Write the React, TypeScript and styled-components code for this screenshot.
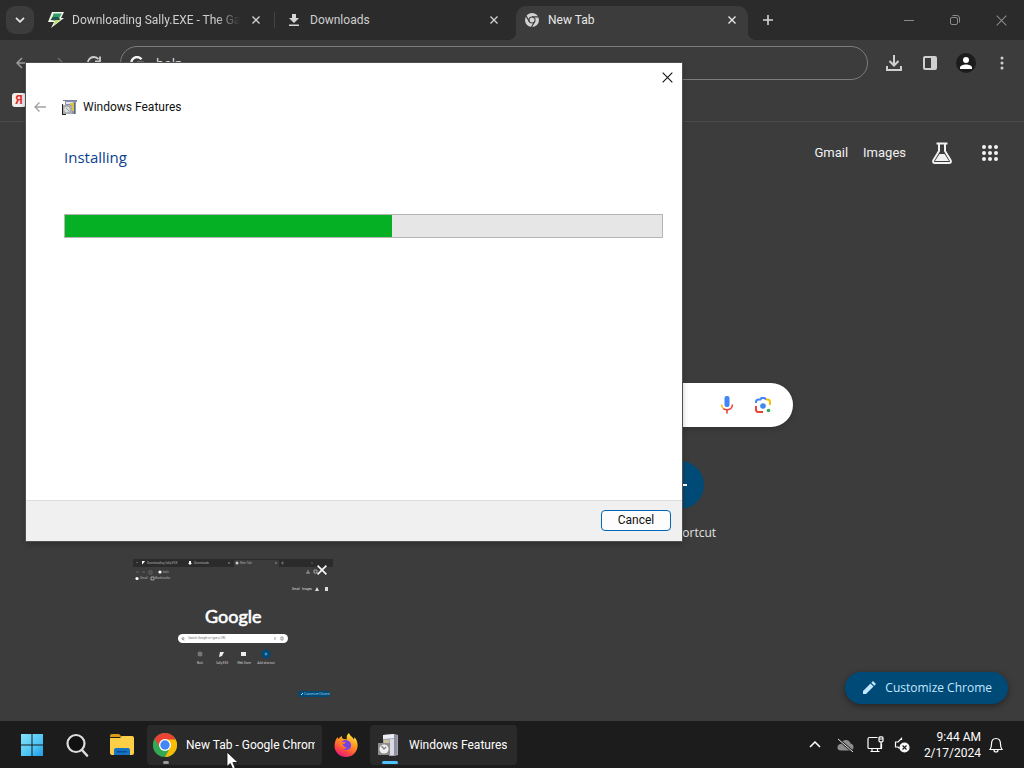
import React from "react";
import styled, { createGlobalStyle } from "styled-components";

const GlobalStyle = createGlobalStyle`
  *, *::before, *::after { box-sizing: border-box; }
  body { margin: 0; background: #3c3c3c; }
  button, input { font: inherit; color: inherit; }
  button { padding: 0; border: 0; background: none; display: inline-flex; align-items: center; justify-content: center; }
  svg { display: block; flex: none; }
`;

const humanist = `"Open Sans", "Noto Sans", sans-serif`;

const Desktop = styled.div`
  position: relative;
  display: flex;
  flex-direction: column;
  min-height: 100vh;
  overflow: hidden;
  background: #3c3c3c;
  color: #e3e3e3;
  font-family: Roboto, sans-serif;
  font-size: 12px;
  line-height: 16px;
`;

/* Browser frame */
const TabStrip = styled.header`
  display: flex;
  align-items: flex-end;
  height: 40px;
  padding-left: 6px;
  background: #2b2b2b;
`;
const TabSearch = styled.button`
  flex: none;
  width: 28px;
  height: 28px;
  margin: 0 6px 6px 0;
  border-radius: 9px;
  background: #3c3c3c;
`;
const Tab = styled.div<{ $active?: boolean; $divided?: boolean }>`
  position: relative;
  display: flex;
  align-items: center;
  gap: 8px;
  flex: 0 1 232px;
  min-width: 0;
  height: 34px;
  margin-right: 6px;
  padding: 0 8px 6px;
  border-radius: 10px 10px 0 0;
  background: ${(p) => (p.$active ? "#3c3c3c" : "transparent")};
  color: ${(p) => (p.$active ? "#e8e8e8" : "#cfcfcf")};

  &::before, &::after {
    content: "";
    display: ${(p) => (p.$active ? "block" : "none")};
    position: absolute;
    bottom: 0;
    width: 8px;
    height: 8px;
  }
  &::before { left: -8px; background: radial-gradient(circle at 0 0, transparent 8px, #3c3c3c 8px); }
  &::after {
    display: ${(p) => (p.$active || p.$divided ? "block" : "none")};
    right: ${(p) => (p.$active ? "-8px" : "-3px")};
    bottom: ${(p) => (p.$active ? "0" : "12px")};
    width: ${(p) => (p.$active ? "8px" : "1px")};
    height: ${(p) => (p.$active ? "8px" : "16px")};
    background: ${(p) => (p.$active ? "radial-gradient(circle at 100% 0, transparent 8px, #3c3c3c 8px)" : "#444")};
  }
`;
const TabTitle = styled.span<{ $fade?: boolean }>`
  flex: 1;
  min-width: 0;
  overflow: hidden;
  white-space: nowrap;
  mask-image: ${(p) => (p.$fade ? "linear-gradient(90deg, #000 86%, transparent)" : "none")};
`;
const TabClose = styled.button`
  width: 16px;
  height: 16px;
`;
const NewTab = styled.button`
  flex: none;
  width: 28px;
  height: 28px;
  margin-bottom: 6px;
`;
const WindowControls = styled.div`
  display: flex;
  align-self: stretch;
  margin-left: auto;
  color: #8a8a8a;
`;
const WindowControl = styled.button`
  width: 46px;
  height: 40px;
`;
const Toolbar = styled.div`
  display: flex;
  align-items: center;
  height: 46px;
  padding: 0 4px;
  color: #9a9a9a;
`;
const ToolButton = styled.button<{ $bright?: boolean }>`
  flex: none;
  width: 36px;
  height: 34px;
  color: ${(p) => (p.$bright ? "#d0d0d0" : "inherit")};
`;
const Omnibox = styled.label`
  display: flex;
  flex: 1;
  align-items: center;
  gap: 12px;
  height: 34px;
  margin: 0 8px;
  padding: 0 9px;
  border: 1px solid #7c7c7c;
  border-radius: 17px;
`;
const OmniboxInput = styled.input`
  flex: 1;
  min-width: 0;
  border: 0;
  outline: 0;
  padding: 0;
  background: none;
  color: #e8e8e8;
  font-family: ${humanist};
  font-size: 13px;
`;
const Avatar = styled.span`
  display: grid;
  place-items: center;
  width: 20px;
  height: 20px;
  border-radius: 50%;
  background: #1c1c1c;
`;
const Bookmarks = styled.nav`
  display: flex;
  align-items: flex-start;
  height: 36px;
  padding: 7px 12px;
  border-bottom: 1px solid #4b4b4b;
`;
const BookmarkIcon = styled.a`
  display: grid;
  place-items: center;
  width: 14px;
  height: 14px;
  border-radius: 3px;
  background: #f3eeee;
  color: #e0322b;
  font-weight: 700;
  line-height: 14px;
  text-decoration: none;
`;

/* New tab page */
const Page = styled.main`
  display: flex;
  flex: 1;
  flex-direction: column;
  align-items: center;
`;
const PageLinks = styled.nav`
  display: flex;
  align-items: center;
  align-self: stretch;
  justify-content: flex-end;
  height: 62px;
  padding-right: 22px;
`;
const PageLink = styled.a`
  margin-left: 15px;
  color: #f1f1f1;
  font-size: 13px;
  text-decoration: none;
`;
const PageTool = styled.button`
  width: 24px;
  height: 24px;
  margin-left: 24px;
`;
const SearchBox = styled.div`
  display: flex;
  align-items: center;
  width: 100%;
  max-width: 562px;
  height: 44px;
  margin-top: 199px;
  padding-right: 18px;
  border-radius: 22px;
  background: #fff;
  box-shadow: 0 2px 6px rgba(0, 0, 0, 0.2);
`;
const SearchInput = styled.input`
  flex: 1;
  min-width: 0;
  border: 0;
  outline: 0;
  background: none;
`;
const SearchTool = styled.button`
  width: 24px;
  height: 24px;
  margin-left: 12px;
`;
const Shortcuts = styled.div`
  display: flex;
  justify-content: flex-end;
  width: 100%;
  max-width: 448px;
  margin-top: 34px;
`;
const Shortcut = styled.button`
  flex-direction: column;
  gap: 16px;
  width: 112px;
  font-family: ${humanist};
`;
const ShortcutDisc = styled.span`
  display: grid;
  place-items: center;
  width: 48px;
  height: 48px;
  border-radius: 50%;
  background: #004a77;
`;
const Customize = styled.button`
  align-self: flex-end;
  gap: 8px;
  height: 32px;
  margin: auto 16px 17px;
  padding: 0 16px;
  border-radius: 16px;
  background: #004a77;
  box-shadow: 0 2px 6px rgba(0, 0, 0, 0.4);
  color: #c2e7ff;
  font-family: ${humanist};
`;

/* Dialog window */
const Dialog = styled.section`
  position: absolute;
  left: 26px;
  top: 63px;
  display: flex;
  flex-direction: column;
  width: 656px;
  height: 478px;
  background: #fff;
  color: #111;
  box-shadow: 0 0 0 1px #505050, 0 2px 6px rgba(0, 0, 0, 0.3);
`;
const DialogBar = styled.div`
  display: flex;
  justify-content: flex-end;
  height: 28px;
`;
const DialogClose = styled.button`
  width: 30px;
  height: 28px;
`;
const DialogTitle = styled.div`
  display: flex;
  align-items: center;
  height: 32px;
  padding-left: 6px;
`;
const DialogBack = styled.button`
  width: 16px;
  height: 16px;
  margin-right: 14px;
`;
const DialogName = styled.h1`
  margin: 0 0 0 5px;
  font-size: 12px;
  font-weight: 400;
`;
const DialogBody = styled.div`
  flex: 1;
  padding: 22px 19px 0 38px;
`;
const Heading = styled.h2`
  margin: 0 0 45px;
  color: #0b3f8f;
  font-family: ${humanist};
  font-size: 15px;
  font-weight: 400;
  line-height: 24px;
`;
const Progress = styled.progress`
  display: block;
  width: 100%;
  height: 24px;
  border: 1px solid #b5b5b5;
  background: #e6e6e6;
  appearance: none;
  &::-webkit-progress-bar { background: #e6e6e6; }
  &::-webkit-progress-value { background: #06b025; }
`;
const DialogFooter = styled.footer`
  display: flex;
  align-items: center;
  justify-content: flex-end;
  height: 41px;
  padding: 0 11px 2px 0;
  border-top: 1px solid #dcdcdc;
  background: #f0f0f0;
`;
const CancelButton = styled.button`
  width: 70px;
  height: 21px;
  border: 1px solid #0067b8;
  border-radius: 4px;
  background: #fdfdfd;
`;

/* Task bar */
const Preview = styled.aside`
  position: absolute;
  left: 133px;
  bottom: 59px;
  width: 200px;
  height: 150px;
`;
const PreviewClose = styled.button`
  position: absolute;
  top: 2px;
  right: 2px;
  width: 18px;
  height: 18px;
`;
const Taskbar = styled.footer`
  display: flex;
  align-items: center;
  height: 47px;
  padding: 0 19px 0 20px;
  background: #1c1c1c;
  color: #fff;
`;
const Launcher = styled.button<{ $gap?: number }>`
  flex: none;
  width: 24px;
  height: 40px;
  margin-right: ${(p) => p.$gap ?? 21}px;
`;
const TaskButton = styled.button<{ $width: number; $active?: boolean; $gap?: number }>`
  position: relative;
  flex: 0 1 ${(p) => p.$width}px;
  min-width: 0;
  height: 40px;
  justify-content: flex-start;
  gap: 9px;
  margin-right: ${(p) => p.$gap ?? 0}px;
  padding: 0 7px 0 6px;
  border-radius: 4px;
  background: #2a2a2a;
  &::after {
    content: "";
    position: absolute;
    left: ${(p) => (p.$active ? 12 : 16)}px;
    bottom: 1px;
    width: ${(p) => (p.$active ? 16 : 6)}px;
    height: 3px;
    border-radius: 2px;
    background: ${(p) => (p.$active ? "#4cc2ff" : "#9a9a9a")};
  }
`;
const TaskLabel = styled.span`
  min-width: 0;
  overflow: hidden;
  white-space: nowrap;
`;
const Tray = styled.div`
  display: flex;
  align-items: center;
  gap: 6px;
  margin-left: auto;
`;
const TrayButton = styled.button<{ $wide?: boolean }>`
  width: ${(p) => (p.$wide ? 24 : 18)}px;
  height: 24px;
`;
const Clock = styled.time`
  width: 64px;
  text-align: right;
  white-space: nowrap;
`;
const Pointer = styled.div`
  position: absolute;
  left: 226px;
  bottom: -2px;
`;

const Cross = ({ size, width = 1, color = "currentColor" }: { size: number; width?: number; color?: string }) => (
  <svg width={size} height={size} viewBox="0 0 10 10" stroke={color} strokeWidth={width} fill="none">
    <path d="M.6.6 9.4 9.4M9.4.6.6 9.4" />
  </svg>
);

const Flash = () => (
  <svg width="16" height="16" viewBox="0 0 16 16">
    <path d="M4 0h12l-3 6h3L3 16l3-6H0z" fill="#f4f8e8" />
    <path d="M5.500 1.500h8.300L11 6.500H4z" fill="#2f9e6b" />
    <path d="M2.500 8 4.500 5H10l2.500 2.500-3 1H6z" fill="#25584a" />
    <path d="M7.500 8H12l-6.500 5.500z" fill="#b9e063" />
  </svg>
);

const GrayChrome = () => (
  <svg width="16" height="16" viewBox="0 0 16 16">
    <circle cx="8" cy="8" r="7" fill="#d2d2d2" />
    <circle cx="8" cy="8" r="3.600" fill="#3c3c3c" />
    <circle cx="8" cy="8" r="2.500" fill="#d2d2d2" />
    <path d="M8 4.900h6.500M5.300 9.550 2.050 3.900M10.700 9.550 7.450 15.200" stroke="#3c3c3c" strokeWidth="1.200" />
  </svg>
);

const ChromeLogo = () => (
  <svg width="24" height="24" viewBox="0 0 24 24">
    <circle cx="12" cy="12" r="12" fill="#34a853" />
    <path d="M12 12 1.600 6A12 12 0 0 1 22.400 6z" fill="#ea4335" />
    <path d="M12 6.500h10.700A12 12 0 0 1 12 24l5-9z" fill="#fbbc04" />
    <path d="M1.600 6 7 15l5-3V6z" fill="#ea4335" />
    <path d="M1.600 6 7.100 15l4.900 3-3.400 5.500A12 12 0 0 1 1.600 6z" fill="#34a853" />
    <circle cx="12" cy="12" r="6" fill="#fff" />
    <circle cx="12" cy="12" r="4.700" fill="#4285f4" />
  </svg>
);

const DialogIcon = () => (
  <svg width="16" height="16" viewBox="0 0 16 16">
    <path d="M3 1h12v2h-1v12H3z" fill="#8f93aa" />
    <path d="M1 1h14v1H1z" fill="#7c82a6" />
    <path d="M4 3h7v2H4z" fill="#dfe6ee" />
    <path d="M8 4h5v8H8z" fill="#d7c542" />
    <path d="M12 4h1v11h-1z" fill="#5d6c86" />
    <path d="M1 6h9v9H1z" fill="#a9adb0" />
    <path d="M0 5h1v11H0zM0 15h4v1H0z" fill="#222" />
    <circle cx="5" cy="10.500" r="2.800" fill="#dedede" />
    <path d="m4 9 3 3" stroke="#888" strokeWidth=".8" />
  </svg>
);

const TaskIcon = () => (
  <svg width="24" height="24" viewBox="0 0 24 24">
    <path d="M7 2 18 1l4 1v20l-4 1H13V10H7z" fill="#a5a6b0" />
    <path d="M7 2 18 1v4L7 6z" fill="#ecedf2" />
    <path d="M14 6h4v16h-4z" fill="#d8d9e2" />
    <path d="M18 1.500 21 2v19l-3 1z" fill="#8d8ea0" />
    <path d="M8 7h5v3H8z" fill="#c8c29a" />
    <path d="M2 10h12v12H2z" fill="#8c8c8c" />
    <circle cx="8" cy="16" r="4.600" fill="#efefef" />
    <path d="m5.500 13 2.500 3 2-2" fill="none" stroke="#808080" strokeWidth="1.300" />
  </svg>
);

const Firefox = () => (
  <svg width="24" height="24" viewBox="0 0 24 24">
    <defs>
      <linearGradient id="fox" x1=".8" y1="0" x2=".3" y2="1">
        <stop offset="0" stopColor="#fff044" />
        <stop offset=".4" stopColor="#ff9a1f" />
        <stop offset=".75" stopColor="#ff4a3f" />
        <stop offset="1" stopColor="#e31587" />
      </linearGradient>
    </defs>
    <path d="M15 0c1 3 4 4 4.500 6.200 1-.5 1-1.700.9-2.200C23 7 24 10 23.500 14 22.500 20 18 24 12 24S.5 19.500.5 13c0-4 1.500-7 3-9 .2 1 .7 1.500 1.200 2C5.500 4.500 6.500 3.500 8 3c-.3 1.500.2 2.500 1.500 3l3.500.3C12 4 13 1.500 15 0z" fill="url(#fox)" />
    <path d="M7 10c1-2.500 4-3.500 6.500-2.500 3 1 4.500 4 3 7-1.500 2.500-5 3.200-7.500 1.500 2 .2 3.500-.5 4-1.500-2 .3-3-1.500-5-1.500C7 13 6.500 11.500 7 10z" fill="#7542e5" />
    <path d="M4.700 9c2-1.800 4 .2 7 .2-.2 1.500-2 1.800-2.800 2 0 1.800 1.500 2.700 3.100 3-2.500 1.300-7 0-7.300-5.200z" fill="#ff7a2b" />
  </svg>
);

const PageThumbnail = () => (
  <svg width="200" height="150" viewBox="0 0 200 150" fontFamily="Roboto, sans-serif" fontSize="3" fill="#aaa">
    <path d="M0 0h200v8H0z" fill="#2b2b2b" />
    <path d="M101 2q0-1 1-1h43q1 0 1 1v6h-45z" fill="#3c3c3c" />
    <path d="m9 2 3 0-1 1.500-2 2zM56 2h2v2h1l-2 2-2-2h1z" fill="#fff" />
    <circle cx="104" cy="4" r="1.500" fill="#ccc" />
    <text x="14" y="5">Downloading Sally.EXE</text>
    <text x="61" y="5">Downloads</text>
    <text x="107" y="5">New Tab</text>
    <path d="m95 3 2 2m0-2-2 2M142 3l2 2m0-2-2 2M148 4h3M149.500 2.500v3M3 3l1 1 1-1M178 4h2" fill="none" stroke="#999" strokeWidth=".5" />
    <path d="M3 13h3M9 13h3M16 12h3v3h-3z" fill="none" stroke="#888" strokeWidth=".5" />
    <circle cx="27" cy="13" r="1.600" fill="#fff" />
    <text x="30" y="14">bolz</text>
    <path d="M173 14h4M175 11v3M181 11h3v3h-3z" fill="none" stroke="#ccc" strokeWidth=".7" />
    <circle cx="4" cy="19.500" r="1.600" fill="#fff" />
    <path d="M18 18h3v3h-3z" fill="none" stroke="#ddd" strokeWidth=".6" />
    <text x="7" y="20">Gmail</text>
    <text x="22" y="20">Bookmarks</text>
    <g fill="#ddd">
      <text x="159" y="31">Gmail</text>
      <text x="169" y="31">Images</text>
      <path d="m184 28-2 4h4zM192 28h3v4h-3z" />
    </g>
    <text x="72" y="64" fontFamily="Lato, sans-serif" fontSize="18" fill="#fff" stroke="#fff" strokeWidth=".6">Google</text>
    <rect x="45" y="75" width="110" height="9" rx="4.500" fill="#fff" />
    <text x="55" y="80" fill="#777">Search Google or type a URL</text>
    <path d="M49 79.500a1 1 0 1 1 2 0 1 1 0 1 1-2 0l2 2M142 78v3M148 78h2v3h-2z" fill="none" stroke="#777" strokeWidth=".7" />
    <circle cx="67" cy="95" r="2.500" fill="#777" />
    <path d="m87 93 4 0-2 4-3 1z M108 93h5v4h-5z" fill="#eee" />
    <circle cx="133" cy="95" r="4.500" fill="#004a77" />
    <path d="M131.500 95h3M133 93.500v3" stroke="#9cd3ff" strokeWidth=".6" />
    <g textAnchor="middle" fill="#ccc">
      <text x="67" y="105">Bolz</text>
      <text x="89" y="105">Sally.EXE</text>
      <text x="111" y="105">Web Store</text>
      <text x="133" y="105">Add shortcut</text>
    </g>
    <rect x="165" y="132" width="32" height="6" rx="3" fill="#004a77" />
    <path d="m168 136 2-2" stroke="#c2e7ff" />
    <text x="171" y="136" fill="#9bc9e8">Customize Chrome</text>
  </svg>
);

export default function App() {
  return (
    <Desktop>
      <GlobalStyle />
      <TabStrip>
        <TabSearch aria-label="Search tabs">
          <svg width="10" height="6" viewBox="0 0 10 6" fill="none" stroke="#e3e3e3" strokeWidth="1.800"><path d="m1 .8 4 4 4-4" /></svg>
        </TabSearch>
        <Tab $divided>
          <Flash />
          <TabTitle $fade>Downloading Sally.EXE - The Ga</TabTitle>
          <TabClose aria-label="Close tab"><Cross size={8} width={1.7} /></TabClose>
        </Tab>
        <Tab>
          <svg width="16" height="16" viewBox="0 0 16 16" fill="#d6d6d6"><path d="M6 2h4v4h3l-5 5-5-5h3zM3 12.500h10V14H3z" /></svg>
          <TabTitle>Downloads</TabTitle>
          <TabClose aria-label="Close tab"><Cross size={8} width={1.7} /></TabClose>
        </Tab>
        <Tab $active>
          <GrayChrome />
          <TabTitle>New Tab</TabTitle>
          <TabClose aria-label="Close tab"><Cross size={8} width={1.7} /></TabClose>
        </Tab>
        <NewTab aria-label="New tab">
          <svg width="10" height="10" viewBox="0 0 10 10" stroke="#d6d6d6" strokeWidth="1.600"><path d="M5 0v10M0 5h10" /></svg>
        </NewTab>
        <WindowControls>
          <WindowControl aria-label="Minimize">
            <svg width="10" height="10" viewBox="0 0 10 10" stroke="currentColor"><path d="M0 5.500h10" /></svg>
          </WindowControl>
          <WindowControl aria-label="Restore">
            <svg width="10" height="10" viewBox="0 0 10 10" fill="none" stroke="currentColor"><rect x=".5" y="2.500" width="7" height="7" rx="1.500" /><path d="M2.500.5H7A2.500 2.500 0 0 1 9.500 3v4.500" /></svg>
          </WindowControl>
          <WindowControl aria-label="Close"><Cross size={11} /></WindowControl>
        </WindowControls>
      </TabStrip>

      <Toolbar>
        <ToolButton aria-label="Back">
          <svg width="12" height="12" viewBox="0 0 12 12" fill="none" stroke="currentColor" strokeWidth="1.500"><path d="M12 6H1M6 1 1 6l5 5" /></svg>
        </ToolButton>
        <ToolButton aria-label="Forward">
          <svg width="12" height="12" viewBox="0 0 12 12" fill="none" stroke="#6c6c6c" strokeWidth="1.500"><path d="M0 6h11M6 1l5 5-5 5" /></svg>
        </ToolButton>
        <ToolButton $bright aria-label="Reload">
          <svg width="14" height="14" viewBox="0 0 14 14" fill="none" stroke="currentColor" strokeWidth="1.800"><path d="M12.500 9A6 6 0 1 1 11.500 3.200M13 .5v5H8" /></svg>
        </ToolButton>
        <Omnibox>
          <svg width="14" height="14" viewBox="0 0 14 14" fill="none" stroke="#f5f5f5" strokeWidth="2.400"><path d="M11.500 3.300A5.600 5.600 0 1 0 12.600 7H7" /></svg>
          <OmniboxInput aria-label="Address and search bar" defaultValue="bolz" />
        </Omnibox>
        <ToolButton $bright aria-label="Downloads">
          <svg width="16" height="16" viewBox="0 0 16 16" fill="none" stroke="currentColor" strokeWidth="2"><path d="M8 0v10M3.500 6 8 10.500 12.500 6M1 11v4h14v-4" /></svg>
        </ToolButton>
        <ToolButton $bright aria-label="Side panel">
          <svg width="14" height="14" viewBox="0 0 14 14"><rect x="1" y="1" width="12" height="12" rx="1" fill="none" stroke="currentColor" strokeWidth="2" /><path d="M8 1h5v12H8z" fill="currentColor" /></svg>
        </ToolButton>
        <ToolButton aria-label="Profile">
          <Avatar><svg width="12" height="12" viewBox="0 0 12 12" fill="#fff"><circle cx="6" cy="3" r="3" /><path d="M0 12v-1.500C0 8.500 3.500 7.500 6 7.500s6 1 6 3V12z" /></svg></Avatar>
        </ToolButton>
        <ToolButton $bright aria-label="Menu">
          <svg width="4" height="14" viewBox="0 0 4 14" fill="currentColor"><circle cx="2" cy="2" r="1.500" /><circle cx="2" cy="7" r="1.500" /><circle cx="2" cy="12" r="1.500" /></svg>
        </ToolButton>
      </Toolbar>
      <Bookmarks aria-label="Bookmarks">
        <BookmarkIcon href="#">Я</BookmarkIcon>
      </Bookmarks>

      <Page>
        <PageLinks>
          <PageLink href="#">Gmail</PageLink>
          <PageLink href="#">Images</PageLink>
          <PageTool aria-label="Search Labs">
            <svg width="20" height="22" viewBox="0 0 20 22" fill="none" stroke="#f1f1f1" strokeWidth="2"><path d="M4.500 1.500h11M7 2v7L1.300 18.500Q.5 21 3 21h14q2.500 0 1.700-2.500L13 9V2" /><path d="M7.500 12h5l4.500 7H3z" fill="#f1f1f1" stroke="none" /></svg>
          </PageTool>
          <PageTool aria-label="Google apps">
            <svg width="16" height="16" viewBox="0 0 16 16" fill="#f1f1f1">
              {[2, 8, 14].map((y) => [2, 8, 14].map((x) => <circle key={`${x}-${y}`} cx={x} cy={y} r="2" />))}
            </svg>
          </PageTool>
        </PageLinks>
        <SearchBox>
          <SearchInput aria-label="Search" />
          <SearchTool aria-label="Voice search">
            <svg width="18" height="18" viewBox="0 0 18 18" fill="none" strokeWidth="1.600"><rect x="6.500" y="0" width="5" height="11" rx="2" fill="#4285f4" /><path d="M3.500 8.500q.2 3 2.200 4.300" stroke="#fbbc04" /><path d="M5.300 12.600q3.700 2.300 7.400 0 1.700-1.500 1.800-4.100" stroke="#ea4335" /><path d="M9 14v3.500" stroke="#ea4335" /></svg>
          </SearchTool>
          <SearchTool aria-label="Search by image">
            <svg width="18" height="18" viewBox="0 0 18 18" fill="none" strokeWidth="2"><path d="M2 7V6q0-2.500 2.500-2.500h2L7.500 2h3L12 3.500" stroke="#4285f4" /><path d="M12 3.500h1.500Q16 3.500 16 6v3" stroke="#fbbc04" /><path d="M2 10v3.500Q2 16 4.500 16H9" stroke="#ea4335" /><circle cx="9" cy="10" r="2.800" fill="#4285f4" /><circle cx="14.500" cy="14.500" r="1.800" fill="#34a853" /></svg>
          </SearchTool>
        </SearchBox>
        <Shortcuts>
          <Shortcut>
            <ShortcutDisc><svg width="14" height="14" viewBox="0 0 14 14" stroke="#fff" strokeWidth="2"><path d="M7 0v14M0 7h14" /></svg></ShortcutDisc>
            Add shortcut
          </Shortcut>
        </Shortcuts>
        <Customize>
          <svg width="16" height="16" viewBox="0 0 16 16" fill="#c2e7ff"><path d="M2 14v-3l7.500-7.500 3 3L5 14zM10.300 2.700 12 1l3 3-1.700 1.700z" /></svg>
          Customize Chrome
        </Customize>
      </Page>

      <Preview aria-label="New Tab preview">
        <PageThumbnail />
        <PreviewClose aria-label="Close window"><Cross size={10} width={1.5} color="#fff" /></PreviewClose>
      </Preview>

      <Dialog role="dialog" aria-labelledby="dialog-name">
        <DialogBar>
          <DialogClose aria-label="Close"><Cross size={11} color="#111" /></DialogClose>
        </DialogBar>
        <DialogTitle>
          <DialogBack aria-label="Back">
            <svg width="12" height="10" viewBox="0 0 12 10" fill="none" stroke="#a3a3a3" strokeWidth="1.400"><path d="M12 5H1M5.500.5 1 5l4.500 4.500" /></svg>
          </DialogBack>
          <DialogIcon />
          <DialogName id="dialog-name">Windows Features</DialogName>
        </DialogTitle>
        <DialogBody>
          <Heading>Installing</Heading>
          <Progress value={548} max={1000} aria-label="Installing" />
        </DialogBody>
        <DialogFooter>
          <CancelButton>Cancel</CancelButton>
        </DialogFooter>
      </Dialog>

      <Taskbar>
        <Launcher aria-label="Start">
          <svg width="24" height="24" viewBox="0 0 24 24">
            <defs><linearGradient id="win" x1="0" y1="0" x2="24" y2="24" gradientUnits="userSpaceOnUse"><stop offset="0" stopColor="#8ae4fc" /><stop offset=".6" stopColor="#4cc5f5" /><stop offset="1" stopColor="#1a94ea" /></linearGradient></defs>
            <path d="M1 1h10.500v10.500H1zM12.500 1H23v10.500H12.500zM1 12.500h10.500V23H1zM12.500 12.500H23V23H12.500z" fill="url(#win)" />
          </svg>
        </Launcher>
        <Launcher aria-label="Search">
          <svg width="24" height="24" viewBox="0 0 24 24" fill="none"><circle cx="11" cy="10.500" r="8.500" fill="#101010" stroke="#dcdcdc" strokeWidth="2.200" /><path d="m17 17 5 5.500" stroke="#dcdcdc" strokeWidth="2.600" strokeLinecap="round" /></svg>
        </Launcher>
        <Launcher $gap={13} aria-label="File Explorer">
          <svg width="24" height="24" viewBox="0 0 24 24"><path d="M0 3q0-2 2-2h7l3 3H0z" fill="#d99a16" /><path d="M0 5h10l2-2h10q2 0 2 2v15q0 2-2 2H2q-2 0-2-2z" fill="#fccf47" /><path d="M4 22v-5q0-2 2-2h12q2 0 2 2v5z" fill="#1672c4" /><path d="M7 18h10v1.500H7z" fill="#0c4d92" /></svg>
        </Launcher>
        <TaskButton $width={175} $gap={12}>
          <ChromeLogo />
          <TaskLabel>New Tab - Google Chrome</TaskLabel>
        </TaskButton>
        <Launcher $gap={12} aria-label="Firefox"><Firefox /></Launcher>
        <TaskButton $width={147} $active>
          <TaskIcon />
          <TaskLabel>Windows Features</TaskLabel>
        </TaskButton>
        <Tray>
          <TrayButton $wide aria-label="Show hidden icons">
            <svg width="12" height="7" viewBox="0 0 12 7" fill="none" stroke="#fff" strokeWidth="1.500"><path d="m1 6 5-5 5 5" /></svg>
          </TrayButton>
          <TrayButton $wide aria-label="OneDrive">
            <svg width="17" height="14" viewBox="0 0 17 14"><path d="M4 12.500q-3.500 0-3.500-3Q.5 6 4 6q1-4 5-4 3.500 0 4.500 3.500Q16.500 6 16.500 9t-3 3.500z" fill="#8d8d8d" /><path d="m1 1 15 13" stroke="#1c1c1c" strokeWidth="2.400" /><path d="m1 1 15 13" stroke="#eee" /></svg>
          </TrayButton>
          <TrayButton $wide aria-label="Network">
            <svg width="17" height="17" viewBox="0 0 17 17" fill="none" stroke="#fff" strokeWidth="1.200"><path d="M10.500 1.500h-8q-1.500 0-1.500 1.500v8.500q0 1 1 1h12.500v-5M5 12.500v3M10.500 12.500v3M3.500 15.500h9" /><rect x="12" y=".8" width="4" height="5" rx="1" /><path d="M12 3h4M14 6v6" /></svg>
          </TrayButton>
          <TrayButton aria-label="Volume">
            <svg width="16" height="16" viewBox="0 0 16 16" fill="none" stroke="#fff" strokeWidth="1.200"><path d="M7.500 3V1.500L4 5H1.500v5H4l1.500 1.500" /><circle cx="10.500" cy="10.500" r="4.500" fill="#fff" /><path d="m8.500 8.500 4 4m0-4-4 4" stroke="#1c1c1c" /></svg>
          </TrayButton>
          <Clock>9:44 AM<br />2/17/2024</Clock>
          <TrayButton aria-label="Notifications">
            <svg width="14" height="16" viewBox="0 0 14 16" fill="none" stroke="#fff" strokeWidth="1.200"><path d="M1 12.500q1.500-2 1.500-5.500Q2.500 1.500 7 1.500T11.500 7q0 3.500 1.500 5.500zM5 13q0 2 2 2t2-2" /></svg>
          </TrayButton>
        </Tray>
      </Taskbar>

      <Pointer>
        <svg width="13" height="19" viewBox="0 0 13 19"><path d="M1 1v14.500l3.300-3 2.300 5.300 2.600-1.100L6.900 11.500H12z" fill="#fff" stroke="#111" strokeWidth=".8" /></svg>
      </Pointer>
    </Desktop>
  );
}
